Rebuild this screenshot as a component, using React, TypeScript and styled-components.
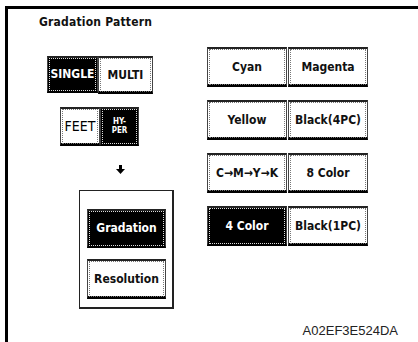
import styled, { createGlobalStyle } from "styled-components";

const GlobalStyle = createGlobalStyle`
  html, body {
    margin: 0;
    padding: 0;
    background: #fff;
  }
  * {
    box-sizing: border-box;
  }
`;

const Page = styled.div`
  width: 418px;
  height: 342px;
  overflow: hidden;
  padding: 6px 0 0 5px;
  background: #fff;
`;

// frame is cut off on the right and at the bottom of the picture
const Frame = styled.div`
  height: 336px;
  border-left: 3px solid #000;
  border-top: 3px solid #000;
  display: flex;
  flex-direction: column;
`;

const Title = styled.div`
  margin: 6px 0 0 31px;
  font-family: "DejaVu Sans Condensed", "DejaVu Sans", sans-serif;
  font-weight: bold;
  font-size: 12px;
  letter-spacing: 0.2px;
  line-height: 15px;
  color: #111;
`;

const Body = styled.div`
  display: flex;
  margin-top: 17px;
  padding-left: 39px;
`;

const LeftCol = styled.div`
  width: 160px;
  display: flex;
  flex-direction: column;
  align-items: flex-start;
  padding-top: 9px;
`;

const Pair = styled.div<{ $indent: number; $top?: number }>`
  display: flex;
  margin-left: ${({ $indent }) => $indent}px;
  margin-top: ${({ $top }) => $top ?? 0}px;
`;

const Key = styled.div<{ $on?: boolean; $w: number; $h?: number }>`
  width: ${({ $w }) => $w}px;
  height: ${({ $h }) => $h ?? 38}px;
  display: flex;
  align-items: center;
  justify-content: center;
  background: ${({ $on }) => ($on ? "#000" : "#fff")};
  color: ${({ $on }) => ($on ? "#fff" : "#111")};
  border: 1px solid #444;
  border-top: 2px solid #222;
  border-bottom: 3px solid #000;
  outline: 1px dotted ${({ $on }) => ($on ? "#ddd" : "#777")};
  outline-offset: -3px;
  font-family: "DejaVu Sans Condensed", "DejaVu Sans", sans-serif;
  font-weight: bold;
  font-size: 12px;
  line-height: 1;
  white-space: nowrap;
`;

const Plain = styled.span`
  font-weight: normal;
  font-size: 14px;
  color: #000;
`;

const Tiny = styled.span`
  font-size: 8px;
  line-height: 9px;
  text-align: center;
`;

const Arrow = styled.svg`
  display: block;
  margin: 19px 0 0 69px;
`;

const Group = styled.div`
  margin: 16px 0 0 32px;
  width: 95px;
  height: 119px;
  border: 1px solid #222;
  border-bottom-width: 2px;
  border-right-width: 2px;
  padding: 18px 0 0 7px;
  display: flex;
  flex-direction: column;
  gap: 11px;
`;

const ColorGrid = styled.div`
  display: grid;
  grid-template-columns: 80px 80px;
  grid-auto-rows: 40px;
  column-gap: 1px;
  row-gap: 13px;
`;

const Footer = styled.div`
  margin-top: auto;
  display: flex;
  justify-content: flex-end;
  padding: 0 20px 4px 0;
  font-family: "Liberation Sans", Arial, sans-serif;
  font-size: 13px;
  line-height: 15px;
  color: #222;
`;

const colors = [
  { label: "Cyan" },
  { label: "Magenta" },
  { label: "Yellow" },
  { label: "Black(4PC)" },
  { label: "C\u2192M\u2192Y\u2192K" },
  { label: "8 Color" },
  { label: "4 Color", on: true },
  { label: "Black(1PC)" },
];

export default function App() {
  return (
    <Page>
      <GlobalStyle />
      <Frame>
        <Title>Gradation Pattern</Title>
        <Body>
          <LeftCol>
            <Pair $indent={0}>
              <Key $on $w={51} $h={37}>SINGLE</Key>
              <Key $w={55}>MULTI</Key>
            </Pair>
            <Pair $indent={13} $top={13}>
              <Key $w={40} $h={39}>
                <Plain>FEET</Plain>
              </Key>
              <Key $on $w={39} $h={39}>
                <Tiny>
                  HY-
                  <br />
                  PER
                </Tiny>
              </Key>
            </Pair>
            <Arrow width="9" height="9" viewBox="0 0 9 9">
              <rect x="3" y="0" width="3" height="4" fill="#000" />
              <path d="M0 4 H9 L4.5 9 Z" fill="#000" />
            </Arrow>
            <Group>
              <Key $on $w={79} $h={39}>Gradation</Key>
              <Key $w={79} $h={40}>Resolution</Key>
            </Group>
          </LeftCol>
          <ColorGrid>
            {colors.map((c) => (
              <Key key={c.label} $on={c.on} $w={80} $h={40}>
                {c.label}
              </Key>
            ))}
          </ColorGrid>
        </Body>
        <Footer>A02EF3E524DA</Footer>
      </Frame>
    </Page>
  );
}
